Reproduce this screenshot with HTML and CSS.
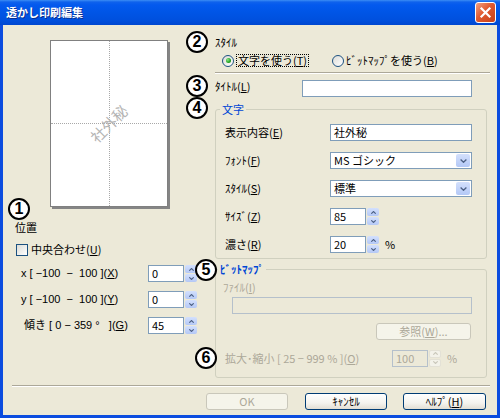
FILE: index.html
```html
<!DOCTYPE html>
<html lang="ja">
<head>
<meta charset="utf-8">
<title>透かし印刷編集</title>
<link rel="stylesheet" href="styles.css">
</head>
<body>
<div class="window">
  <div class="titlebar">
    <span class="title">透かし印刷編集</span>
    <div class="close"><svg width="13" height="13" viewBox="0 0 13 13"><path d="M2.5 2.5 L10.5 10.5 M10.5 2.5 L2.5 10.5" stroke="#fff" stroke-width="2.2" stroke-linecap="square"/></svg></div>
  </div>
  <div class="client">
    <div class="main">
      <div class="left">
        <div class="preview-row">
          <div class="circle c1">1</div>
          <div class="paper"><span class="wm">社外秘</span></div>
        </div>
        <div class="pos-title">位置</div>
        <div class="check-row"><span class="checkbox"></span><span>中央合わせ(<u>U</u>)</span></div>
        <div class="spin-rows">
          <div class="spin-row">
            <span class="lbl-xy">x [ −100  −  100 ](<u>X</u>)</span>
            <div class="tb num">0</div>
            <div class="spin"><span class="sb"><svg width="5" height="3" viewBox="0 0 5 3"><path d="M0.3 2.7 L2.5 0.5 L4.7 2.7" fill="none" stroke="#4D6185" stroke-width="1.1"/></svg></span><span class="sb"><svg width="5" height="3" viewBox="0 0 5 3"><path d="M0.3 0.3 L2.5 2.5 L4.7 0.3" fill="none" stroke="#4D6185" stroke-width="1.1"/></svg></span></div>
          </div>
          <div class="spin-row">
            <span class="lbl-xy">y [ −100  −  100 ](<u>Y</u>)</span>
            <div class="tb num">0</div>
            <div class="spin"><span class="sb"><svg width="5" height="3" viewBox="0 0 5 3"><path d="M0.3 2.7 L2.5 0.5 L4.7 2.7" fill="none" stroke="#4D6185" stroke-width="1.1"/></svg></span><span class="sb"><svg width="5" height="3" viewBox="0 0 5 3"><path d="M0.3 0.3 L2.5 2.5 L4.7 0.3" fill="none" stroke="#4D6185" stroke-width="1.1"/></svg></span></div>
          </div>
          <div class="spin-row">
            <span class="lbl-xy"> 傾き [ 0 − 359 °   ](<u>G</u>)</span>
            <div class="tb num">45</div>
            <div class="spin"><span class="sb"><svg width="5" height="3" viewBox="0 0 5 3"><path d="M0.3 2.7 L2.5 0.5 L4.7 2.7" fill="none" stroke="#4D6185" stroke-width="1.1"/></svg></span><span class="sb"><svg width="5" height="3" viewBox="0 0 5 3"><path d="M0.3 0.3 L2.5 2.5 L4.7 0.3" fill="none" stroke="#4D6185" stroke-width="1.1"/></svg></span></div>
          </div>
        </div>
      </div>

      <div class="right">
        <div class="row2">
          <div class="circle">2</div>
          <span>ｽﾀｲﾙ</span>
        </div>
        <div class="radio-row">
          <div class="radio-item first"><span class="radio on"></span><span class="focus">文字を使う(<u>T</u>)</span></div>
          <div class="radio-item"><span class="radio"></span><span>ﾋﾞｯﾄﾏｯﾌﾟを使う(<u>B</u>)</span></div>
        </div>
        <div class="hsep"></div>
        <div class="row3">
          <div class="circle">3</div>
          <span class="lbl">ﾀｲﾄﾙ(<u>L</u>)</span>
          <div class="tb title-input"></div>
        </div>
        <div class="row4">
          <div class="circle">4</div>
          <fieldset class="group g4">
            <legend>文字</legend>
            <div class="gbody g4body">
              <div class="frow"><span class="flbl">表示内容(<u>E</u>)</span><div class="tb wide">社外秘</div></div>
              <div class="frow"><span class="flbl">ﾌｫﾝﾄ(<u>F</u>)</span><div class="tb wide select"><span>MS ゴシック</span><span class="dd"><svg width="7" height="4" viewBox="0 0 7 4"><path d="M0.6 0.6 L3.5 3.3 L6.4 0.6" fill="none" stroke="#4D6185" stroke-width="1.3"/></svg></span></div></div>
              <div class="frow"><span class="flbl">ｽﾀｲﾙ(<u>S</u>)</span><div class="tb wide select"><span>標準</span><span class="dd"><svg width="7" height="4" viewBox="0 0 7 4"><path d="M0.6 0.6 L3.5 3.3 L6.4 0.6" fill="none" stroke="#4D6185" stroke-width="1.3"/></svg></span></div></div>
              <div class="frow"><span class="flbl">ｻｲｽﾞ(<u>Z</u>)</span><div class="tb num">85</div><div class="spin"><span class="sb"><svg width="5" height="3" viewBox="0 0 5 3"><path d="M0.3 2.7 L2.5 0.5 L4.7 2.7" fill="none" stroke="#4D6185" stroke-width="1.1"/></svg></span><span class="sb"><svg width="5" height="3" viewBox="0 0 5 3"><path d="M0.3 0.3 L2.5 2.5 L4.7 0.3" fill="none" stroke="#4D6185" stroke-width="1.1"/></svg></span></div></div>
              <div class="frow"><span class="flbl">濃さ(<u>R</u>)</span><div class="tb num">20</div><div class="spin"><span class="sb"><svg width="5" height="3" viewBox="0 0 5 3"><path d="M0.3 2.7 L2.5 0.5 L4.7 2.7" fill="none" stroke="#4D6185" stroke-width="1.1"/></svg></span><span class="sb"><svg width="5" height="3" viewBox="0 0 5 3"><path d="M0.3 0.3 L2.5 2.5 L4.7 0.3" fill="none" stroke="#4D6185" stroke-width="1.1"/></svg></span></div><span class="pct">%</span></div>
            </div>
          </fieldset>
        </div>
        <div class="row5">
          <div class="circle">5</div>
          <fieldset class="group g5">
            <legend>ﾋﾞｯﾄﾏｯﾌﾟ</legend>
            <div class="gbody g5body">
              <span class="dis file-label">ﾌｧｲﾙ(<u>I</u>)</span>
              <div class="tb disabled file-input"></div>
              <div class="btn disabled browse">参照(<u>W</u>)...</div>
              <div class="row6">
                <div class="circle">6</div>
                <span class="lbl dis">拡大･縮小 [ 25 − 999 % ](<u>O</u>)</span>
                <div class="tb num disabled">100</div>
                <div class="spin dis-spin"><span class="sb"><svg width="5" height="3" viewBox="0 0 5 3"><path d="M0.3 2.7 L2.5 0.5 L4.7 2.7" fill="none" stroke="#C9C7BA" stroke-width="1.1"/></svg></span><span class="sb"><svg width="5" height="3" viewBox="0 0 5 3"><path d="M0.3 0.3 L2.5 2.5 L4.7 0.3" fill="none" stroke="#C9C7BA" stroke-width="1.1"/></svg></span></div>
                <span class="pct dis">%</span>
              </div>
            </div>
          </fieldset>
        </div>
      </div>
    </div>
    <div class="bottom-sep"></div>
    <div class="buttons">
      <div class="btn disabled ok">OK</div>
      <div class="btn">ｷｬﾝｾﾙ</div>
      <div class="btn help">ﾍﾙﾌﾟ(<u>H</u>)</div>
    </div>
  </div>
</div>
</body>
</html>
```

FILE: styles.css
```css
* { box-sizing: border-box; }
html, body { margin: 0; padding: 0; }
body {
  width: 500px; height: 418px; overflow: hidden;
  background: #ECE9D8;
  font-family: "Noto Sans CJK JP", "Noto Sans", sans-serif;
  font-size: 11px; line-height: 13px; color: #000;
}
u { text-decoration: underline; text-underline-offset: 1px; }

.window { width: 500px; height: 418px; display: flex; flex-direction: column; background: #0B4CDF; }
.titlebar {
  flex: none; height: 25px; display: flex; align-items: center; justify-content: space-between;
  padding: 0 4px 0 6px;
  background: linear-gradient(to bottom, #3C8DF5 0, #0F62EC 2px, #0359EE 5px, #0055E6 50%, #0050DE 80%, #0047D0 100%);
}
.title { color: #fff; font-size: 11px; font-weight: bold; line-height: 13px; text-shadow: 1px 1px 0 #0A2F8F; }
.close {
  width: 21px; height: 21px; border: 1px solid #fff; border-radius: 3px;
  background: linear-gradient(135deg, #F2A184 0%, #E0592F 45%, #C8411A 100%);
  display: flex; align-items: center; justify-content: center;
}
.client { flex: 1; margin: 0 3px 3px; background: #ECE9D8; display: flex; flex-direction: column; }
.main { flex: none; height: 360px; display: flex; }
.left { width: 182px; flex: none; display: flex; flex-direction: column; }
.right { width: 312px; flex: none; display: flex; flex-direction: column; padding-left: 1px; }

.circle {
  flex: none; width: 22px; height: 22px; border: 2px solid #000; border-radius: 50%;
  background: #fff; display: flex; align-items: center; justify-content: center;
  font-family: "Liberation Sans", Arial, sans-serif; font-weight: bold; font-size: 16px; line-height: 1;
  position: relative; z-index: 1;
}

/* left column */
.preview-row { display: flex; align-items: flex-end; margin-top: 15px; padding-left: 5px; }
.c1 { margin-bottom: -13px; }
.paper {
  position: relative; width: 118px; height: 167px; margin-left: 20px;
  background: #fff; border: 1px solid #808080; box-shadow: 2px 2px 0 #858585;
  display: flex; align-items: center; justify-content: center;
}
.paper::before { content: ""; position: absolute; left: 58px; top: 0; bottom: 0; border-left: 1px dotted #A8A8A8; }
.paper::after { content: ""; position: absolute; top: 82px; left: 0; right: 0; border-top: 1px dotted #A8A8A8; }
.wm { transform: rotate(-45deg); color: #B4B4B4; font-size: 15px; line-height: 15px; position: relative; z-index: 1; }

.pos-title { margin-top: 14px; padding-left: 12px; }
.check-row { margin-top: 9px; padding-left: 13px; display: flex; align-items: center; gap: 3px; height: 13px; }
.checkbox { width: 12px; height: 12px; border: 1px solid #1C5180; background: linear-gradient(135deg, #DCDCD7, #fff); }
.spin-rows { margin-top: 9px; padding-left: 18px; display: flex; flex-direction: column; gap: 9px; }
.spin-row { display: flex; align-items: center; height: 17px; width: 176px; }
.lbl-xy { white-space: pre; margin-right: auto; font-family: "Liberation Sans", "Noto Sans CJK JP", sans-serif; }

.tb { height: 17px; border: 1px solid #7F9DB9; background: #fff; padding-left: 3px; line-height: 15px; white-space: nowrap; }
.num { width: 36px; flex: none; }
.spin { flex: none; width: 12px; height: 17px; margin-left: 1px; display: flex; flex-direction: column; gap: 1px; }
.sb { flex: 1; border-radius: 2px; background: linear-gradient(to bottom, #D3E0FD, #B4C8F6); display: flex; align-items: center; justify-content: center; }
.dis-spin .sb { background: #F3F2EA; border: 1px solid #E3E1D6; }

/* right column */
.row2 { display: flex; align-items: center; gap: 7px; margin-top: 6px; }
.radio-row { display: flex; align-items: center; margin-top: 1px; padding-left: 36px; height: 13px; }
.radio-item { display: flex; align-items: center; gap: 2px; }
.radio-item.first { width: 110px; }
.radio {
  width: 12px; height: 12px; border-radius: 50%; border: 1px solid #1C5180;
  background: linear-gradient(135deg, #DCDCD7, #fff);
  display: flex; align-items: center; justify-content: center;
}
.radio.on::after { content: ""; width: 5px; height: 5px; border-radius: 50%; background: radial-gradient(circle at 35% 35%, #8BEA86, #21A121 60%, #0E7A0E); }
.focus { border: 1px dotted #000; line-height: 11px; padding: 0 1px; }
.hsep { margin: 5px 0 0 29px; width: 275px; height: 2px; border-top: 1px solid #ACA899; border-bottom: 1px solid #fff; }

.row3 { display: flex; align-items: center; margin-top: 1px; }
.row3 .lbl { width: 87px; margin-left: 7px; flex: none; }
.title-input { width: 170px; align-self: flex-start; margin-top: 5px; }

.row4 { display: flex; align-items: flex-start; }
.group { margin: 0; border: 1px solid #D0D0BF; border-radius: 3px; padding: 0; min-width: 0; }
.group legend { padding: 0 2px; color: #0046D5; line-height: 13px; }
.g4 { margin: 6px 0 0 7px; width: 272px; padding: 8px 0 5px 0; }
.g4 legend { margin-left: 4px; }
.g4body { padding: 0 14px 0 9px; display: flex; flex-direction: column; gap: 11px; }
.frow { display: flex; align-items: center; height: 17px; }
.flbl { width: 105px; flex: none; }
.wide { width: 142px; flex: none; }
.select { display: flex; align-items: center; justify-content: space-between; padding: 0 1px 0 3px; }
.dd { width: 14px; height: 13px; border-radius: 2px; background: linear-gradient(#D4E0FC, #B3C8F6); display: flex; align-items: center; justify-content: center; }
.pct { margin-left: 6px; }

.row5 { display: flex; align-items: flex-start; padding-left: 9px; }
.g5 { margin: 4px 0 0 -2px; width: 272px; padding: 5px 0 8px 0; }
.g5 legend { margin-left: 2px; font-weight: bold; }
.g5body { padding: 0 14px 0 7px; display: flex; flex-direction: column; }
.dis { color: #ACA899; }
.file-input { margin: 3px 0 0 9px; width: 240px; }
.tb.disabled { background: #ECE9D8; border-color: #B5C0CB; color: #ACA899; }
.browse { width: 95px; align-self: flex-end; margin: 9px 1px 0 0; }
.row6 { display: flex; align-items: center; height: 22px; margin-top: 7px; }
.row6 .circle { margin-left: -28px; }
.row6 .lbl { width: 167px; margin-left: 8px; flex: none; white-space: pre; }

.btn {
  height: 17px; border: 1px solid #003C74; border-radius: 3px;
  background: linear-gradient(#FFFFFF, #F4F3EE 60%, #E2DED3);
  display: flex; align-items: center; justify-content: center;
}
.btn.disabled { border-color: #C9C7BA; background: #F5F4EA; color: #ACA899; }

.bottom-sep { margin: 0 7px 0 9px; height: 2px; border-top: 1px solid #ACA899; border-bottom: 1px solid #fff; }
.buttons { display: flex; justify-content: flex-end; gap: 16px; margin-top: 6px; padding-right: 11px; }
.buttons .btn { width: 82px; }
.buttons .ok { margin-right: 1px; }
.buttons .help { width: 83px; }
```
